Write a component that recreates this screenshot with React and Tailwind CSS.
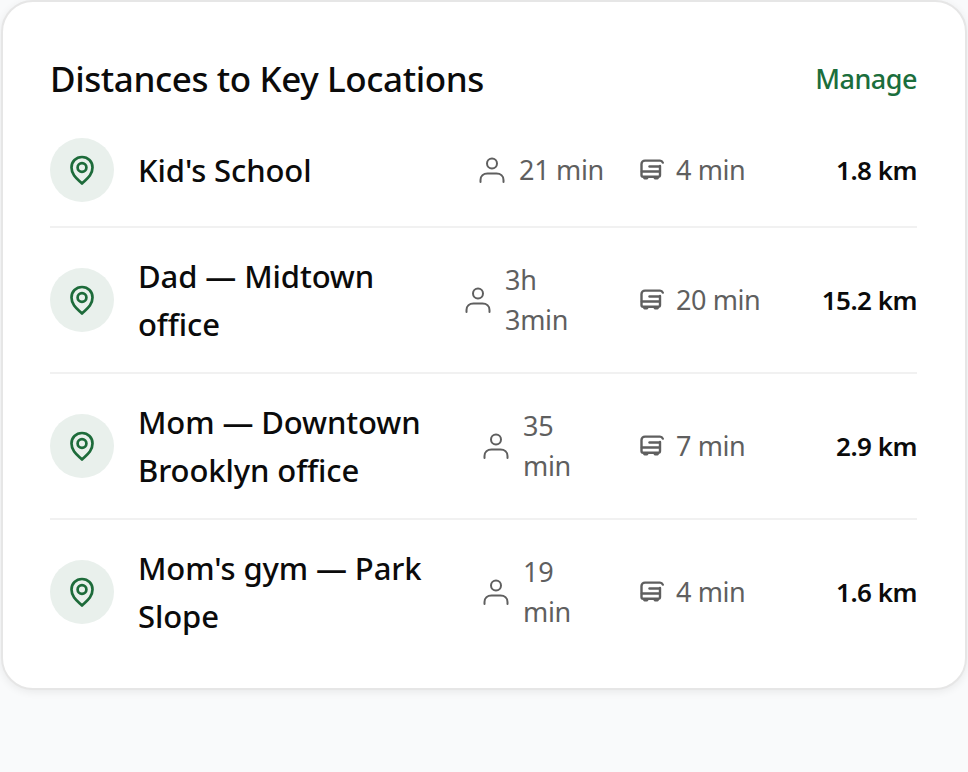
import React from 'react';

const locations = [
  { name: "Kid's School", walk: '21 min', walkWidth: 'w-[85px]', drive: '4 min', km: '1.8 km' },
  { name: 'Dad — Midtown office', walk: '3h 3min', walkWidth: 'w-[99px]', drive: '20 min', km: '15.2 km' },
  { name: 'Mom — Downtown Brooklyn office', walk: '35 min', walkWidth: 'w-[81px]', drive: '7 min', km: '2.9 km' },
  { name: "Mom's gym — Park Slope", walk: '19 min', walkWidth: 'w-[81px]', drive: '4 min', km: '1.6 km' },
];

const PinIcon = () => (
  <svg viewBox="0 0 32 32" className="w-8 h-8 text-[#1d6b3a]" fill="none" stroke="currentColor" strokeWidth="2.7" strokeLinejoin="round">
    <path d="M16 29.5 C12 25.5 5.5 21.5 5.5 13.5 C5.5 7.5 10 3 16 3 C22 3 26.5 7.5 26.5 13.5 C26.5 21.5 20 25.5 16 29.5 Z" />
    <circle cx="16" cy="13.5" r="4.4" />
  </svg>
);

const PersonIcon = () => (
  <svg viewBox="0 0 28 28" className="w-7 h-7 shrink-0 text-[#5f5f5f]" fill="none" stroke="currentColor" strokeWidth="2" strokeLinecap="round">
    <circle cx="14" cy="7.5" r="5" />
    <path d="M2.5 26 V24 C2.5 20 5.5 17.5 9.5 17.5 H18.5 C22.5 17.5 25.5 20 25.5 24 V26" />
  </svg>
);

const BusIcon = () => (
  <svg viewBox="0 0 26 24" className="w-[26px] h-6 shrink-0 text-[#5f5f5f]" fill="none" stroke="currentColor" strokeWidth="2.4" strokeLinecap="round" strokeLinejoin="round">
    <path d="M20 8 V17 C20 18 19.3 18.7 18.3 18.7 H3.2 C2.2 18.7 1.5 18 1.5 17 V6 C1.5 4 3 2.6 5 2.6 H20 C21.2 2.6 22.2 3.2 22.8 4.6" />
    <path d="M2 13.5 H19.5" />
    <path d="M9.5 8.5 H19.5" />
    <path d="M4.5 20 H7 M15 20 H17.5" strokeWidth="2.8" />
  </svg>
);

export default function App() {
  return (
    <div className="min-h-[772px] bg-[#f9fafb] font-['Noto_Sans',sans-serif]">
      <div className="mx-auto w-[966px] rounded-[32px] border-2 border-[#e6e6e6] bg-white pb-[48px] pl-[47px] pr-12 pt-[45px] shadow-[0_2px_8px_rgba(0,0,0,0.07)]">
        <div className="mb-[3px] flex h-16 items-center justify-between">
          <h2 className="text-[35px] font-medium tracking-[-0.4px] text-[#0b0b0b]">Distances to Key Locations</h2>
          <button className="text-[27px] font-medium tracking-[-0.5px] text-[#1b6e3c]">Manage</button>
        </div>
        {locations.map((loc, i) => (
          <div
            key={loc.name}
            className={`flex items-center pt-6 ${i < locations.length - 1 ? 'border-b-2 border-[#f1f1f1] pb-6' : ''}`}
          >
            <div className="flex h-16 w-16 shrink-0 items-center justify-center rounded-full bg-[#e9f0ec]">
              <PinIcon />
            </div>
            <div className="ml-6 min-w-0 flex-1 text-[31px] font-medium leading-[48px] tracking-[-0.1px] text-[#0b0b0b]">
              <span className="block w-[300px]">{loc.name}</span>
            </div>
            <div className="flex items-center gap-[13px] text-[27px] leading-[40px] tracking-[-0.3px] text-[#5f5f5f]">
              <PersonIcon />
              <span className={loc.walkWidth}>{loc.walk}</span>
            </div>
            <div className="ml-9 flex w-[178px] items-center gap-[10px] text-[27px] leading-[40px] tracking-[-0.4px] text-[#5f5f5f]">
              <BusIcon />
              <span>{loc.drive}</span>
            </div>
            <div className="w-[99px] whitespace-nowrap text-right text-[26px] font-semibold tracking-[-0.5px] text-[#0b0b0b]">{loc.km}</div>
          </div>
        ))}
      </div>
    </div>
  );
}
